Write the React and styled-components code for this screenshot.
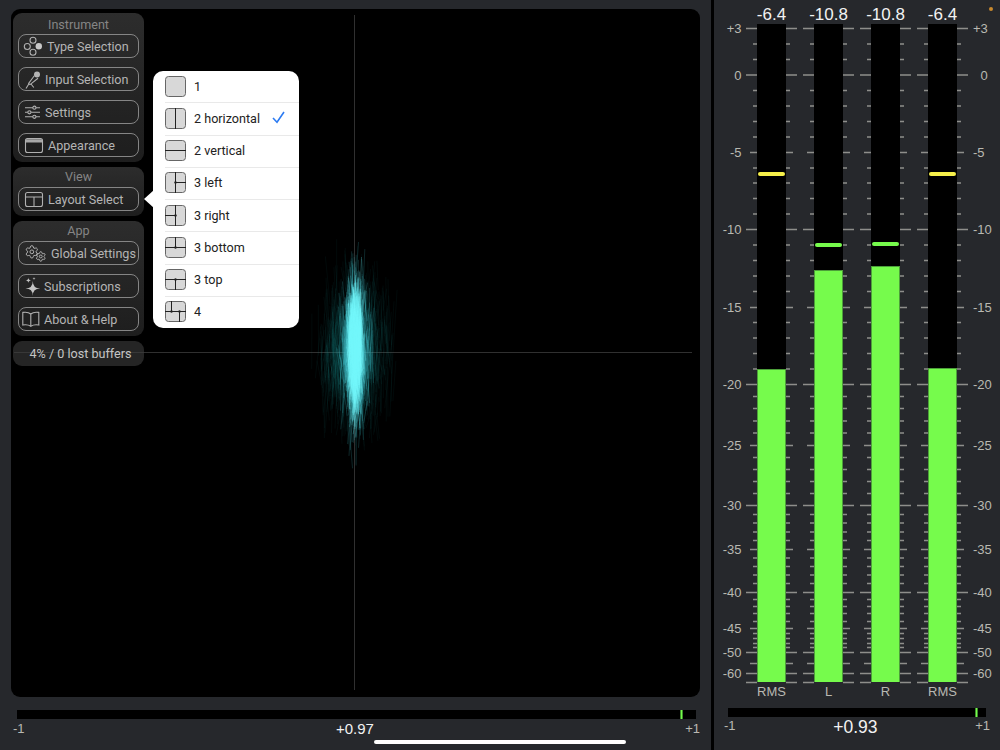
import styled, {createGlobalStyle} from "styled-components";

const GlobalStyle = createGlobalStyle`
    html, body {
        margin: 0;
        padding: 0;
        background: #26282c;
    }
    * {
        box-sizing: border-box;
    }
`;

const UI_FONT = `Roboto, "Liberation Sans", sans-serif`;
const METER_FONT = `"Liberation Sans", Arial, sans-serif`;

const Page = styled.div`
    position: relative;
    width: 1000px;
    height: 750px;
    overflow: hidden;
    display: flex;
    background: #26282c;
`;

const LeftPanel = styled.div`
    width: 711px;
    padding: 9px 11px 0;
    display: flex;
    flex-direction: column;
`;

const Divider = styled.div`
    width: 3px;
    background: #000;
`;

const RightPanel = styled.div`
    position: relative;
    flex: 1;
    display: flex;
    flex-direction: column;
`;

const Scope = styled.div`
    position: relative;
    width: 689px;
    height: 688px;
    flex-shrink: 0;
    background: #000;
    border-radius: 9px;
    overflow: hidden;
`;

const ScopeDrawing = styled.svg`
    display: block;
    width: 689px;
    height: 688px;
`;

const Sidebar = styled.div`
    position: absolute;
    left: 2px;
    top: 4px;
    width: 131px;
    display: flex;
    flex-direction: column;
    gap: 5px;
    font-family: ${UI_FONT};
`;

const Group = styled.div`
    padding: 2px 5px 4.5px;
    display: flex;
    flex-direction: column;
    gap: 9px;
    border-radius: 9px;
    background: linear-gradient(rgba(72, 72, 72, 0.62), rgba(54, 54, 54, 0.55));
`;

const GroupTitle = styled.div`
    height: ${(p) => (p.$compact ? 18.5 : 19)}px;
    margin-bottom: -9px;
    line-height: ${(p) => (p.$compact ? 15 : 19)}px;
    text-align: center;
    font-size: 12.6px;
    color: #858585;
`;

const MenuButton = styled.div`
    height: 24px;
    display: flex;
    align-items: center;
    border: 1px solid #858585;
    border-radius: 8px;
    color: #b4b4b4;
    font-size: 12.6px;
    white-space: nowrap;
`;

const IconSlot = styled.div`
    width: ${(p) => p.$width}px;
    height: 22px;
    flex-shrink: 0;
`;

const ButtonIcon = styled.svg`
    display: block;
    margin: -1px 0 0 -1px;
    overflow: visible;
    fill: none;
    stroke: #b0b0b0;
    stroke-width: 1.1;
`;

const Status = styled.div`
    height: 25px;
    padding-left: 4px;
    line-height: 25px;
    text-align: center;
    border-radius: 9px;
    font-size: 12.6px;
    color: #c4c4c4;
    background: rgba(62, 62, 62, 0.6);
`;

const Popover = styled.div`
    position: absolute;
    left: 142px;
    top: 62px;
    width: 146px;
    height: 257px;
    display: flex;
    flex-direction: column;
    background: #fff;
    border-radius: 10px;
    font-family: ${UI_FONT};

    &::before {
        content: "";
        position: absolute;
        left: -9px;
        top: 119px;
        width: 10px;
        height: 18px;
        background: #fff;
        clip-path: polygon(0 50%, 100% 0, 100% 100%);
    }
`;

const LayoutRow = styled.div`
    flex: 1;
    margin-left: 12px;
    padding-bottom: 1px;
    display: flex;
    align-items: center;
    gap: 8px;
    font-size: 12.6px;
    color: #222;
    border-bottom: ${(p) => (p.$last ? "none" : "1px solid #e9e9e9")};
`;

const LayoutLabel = styled.span`
    flex: 1;
`;

const CheckMark = styled.svg`
    width: 14px;
    height: 14px;
    margin-right: 13px;
    fill: none;
    stroke: #2c7bf2;
    stroke-width: 1.6;
`;

const BalanceBlock = styled.div`
    display: flex;
    flex-direction: column;
    margin: ${(p) => p.$margin};
`;

const BalanceTrack = styled.div`
    position: relative;
    height: 9px;
    margin: 0 ${(p) => p.$inset}px;
    background: #000;
`;

const BalanceMark = styled.div`
    position: absolute;
    top: 0;
    bottom: 0;
    left: ${(p) => p.$left}px;
    width: ${(p) => p.$width}px;
    background: #76fb4c;
    border: 0 solid #3f8f2c;
    border-width: 0 0.5px;
`;

const BalanceLabels = styled.div`
    display: flex;
    justify-content: space-between;
    align-items: center;
    height: ${(p) => p.$height}px;
    font-family: ${METER_FONT};
    font-size: 13px;
    color: #b9b9b2;
`;

const BalanceValue = styled.span`
    margin-top: ${(p) => p.$drop || 0}px;
    font-size: ${(p) => p.$size}px;
    color: #f2f2f2;
`;

const MeterColumns = styled.div`
    position: relative;
    display: flex;
    gap: 28px;
    padding: 5px 0 0 43px;
    font-family: ${METER_FONT};
`;

const MeterColumn = styled.div`
    width: 29px;
    display: flex;
    flex-direction: column;
    align-items: center;
`;

const PeakValue = styled.div`
    height: 19px;
    line-height: 19px;
    font-size: 17px;
    color: #f2f2f2;
    white-space: nowrap;
`;

const MeterBar = styled.div`
    position: relative;
    width: 29px;
    height: 658px;
    display: flex;
    flex-direction: column;
    justify-content: flex-end;
    background: #000;
`;

const MeterFill = styled.div`
    height: ${(p) => p.$height}px;
    background: #76fb4c;
    border: 1px solid #4d9f3a;
    border-bottom: none;
`;

const PeakHold = styled.div`
    position: absolute;
    left: 1px;
    right: 1px;
    top: ${(p) => p.$top}px;
    height: 4px;
    border-radius: 2px;
    background: ${(p) => p.$color};
`;

const MeterName = styled.div`
    height: 20px;
    line-height: 20px;
    font-size: 13px;
    color: #b9b9b2;
`;

const ScaleDrawing = styled.svg`
    position: absolute;
    left: 0;
    top: 0;
    width: 286px;
    height: 700px;
    font-family: ${METER_FONT};
    font-size: 13px;
`;

const BlinkDot = styled.div`
    position: absolute;
    right: 7px;
    top: 7px;
    width: 4px;
    height: 4px;
    border-radius: 50%;
    background: #c98a2e;
`;

const HomeIndicator = styled.div`
    position: absolute;
    left: 374px;
    bottom: 6px;
    width: 252px;
    height: 4px;
    border-radius: 2px;
    background: #fff;
`;

// ----- scope noise -----
const makeRandom = (seed) => () => {
    seed = (seed + 0x6d2b79f5) | 0;
    let t = Math.imul(seed ^ (seed >>> 15), 1 | seed);
    t = (t + Math.imul(t ^ (t >>> 7), 61 | t)) ^ t;
    return ((t ^ (t >>> 14)) >>> 0) / 4294967296;
};

const makeStreaks = (count, spreadX, spreadY, seed) => {
    const random = makeRandom(seed);
    const gauss = () => (random() + random() + random() + random() - 2) / 0.82;
    const streaks = [];
    for (let i = 0; i < count; i++) {
        const x = gauss() * spreadX;
        const y = gauss() * spreadY * Math.sqrt(Math.max(0.05, 1 - (x * x) / (spreadX * spreadX * 6)));
        const len = 8 + random() * spreadY * 0.6;
        const lean = (random() - 0.5) * 6;
        streaks.push(`M${(355 + x - lean).toFixed(1)} ${(350 + y - len).toFixed(1)}L${(355 + x + lean).toFixed(1)} ${(350 + y + len).toFixed(1)}`);
    }
    return streaks.join("");
};

const HALO = makeStreaks(800, 22, 46, 11);
const MIDDLE = makeStreaks(620, 8.5, 43, 23);
const CORE = makeStreaks(520, 4.4, 36, 37);

const Waveform = () => (
    <ScopeDrawing viewBox="11 9 689 688">
        <path d="M354.5 15V690M14 352.5H692" stroke="#303030" strokeWidth="1" fill="none" />
        <path d={HALO} stroke="#1f8a8e" strokeOpacity="0.07" strokeWidth="1" fill="none" />
        <path d={MIDDLE} stroke="#3fc0c6" strokeOpacity="0.2" strokeWidth="1" fill="none" />
        <path d={CORE} stroke="#72f8fc" strokeOpacity="0.26" strokeWidth="1" fill="none" />
    </ScopeDrawing>
);

// ----- toolbar icons, drawn in button coordinates -----
const GEAR =
    "M9.671 4.136a2.34 2.34 0 0 1 4.659 0 2.34 2.34 0 0 0 3.319 1.915 2.34 2.34 0 0 1 2.33 4.033 2.34 2.34 0 0 0 0 3.831 2.34 2.34 0 0 1-2.33 4.033 2.34 2.34 0 0 0-3.319 1.915 2.34 2.34 0 0 1-4.659 0 2.34 2.34 0 0 0-3.32-1.915 2.34 2.34 0 0 1-2.33-4.033 2.34 2.34 0 0 0 0-3.831A2.34 2.34 0 0 1 6.35 6.051a2.34 2.34 0 0 0 3.32-1.915";

const star = (cx, cy, r) =>
    `M${cx} ${cy - r}Q${cx} ${cy} ${cx + r} ${cy}Q${cx} ${cy} ${cx} ${cy + r}Q${cx} ${cy} ${cx - r} ${cy}Q${cx} ${cy} ${cx} ${cy - r}Z`;

const Gear = ({x, y, scale}) => (
    <g transform={`translate(${x} ${y}) scale(${scale})`} strokeWidth={1 / scale}>
        <path d={GEAR} />
        <circle cx="12" cy="12" r="3" />
    </g>
);

const ICONS = {
    type: (
        <>
            <circle cx="15" cy="6.3" r="3" />
            <circle cx="9.3" cy="12.5" r="3" />
            <circle cx="15" cy="18.3" r="3" />
            <circle cx="20.8" cy="12.3" r="3.2" fill="#c8c8c8" stroke="none" />
        </>
    ),
    input: (
        <>
            <circle cx="19" cy="7.6" r="3" fill="#b4b4b4" stroke="none" />
            <path d="M16.5 8.5L10.6 16.4 12 17.6 20 11.2M10.8 17L8 21.5M13 17L15.8 20.5" />
        </>
    ),
    settings: (
        <>
            <path d="M7 7.7H22M7 12.3H22M7 16.8H22" />
            <circle cx="16.4" cy="7.7" r="1.6" fill="#2f2f2f" />
            <circle cx="11.4" cy="12.3" r="1.6" fill="#2f2f2f" />
            <circle cx="16.4" cy="16.8" r="1.6" fill="#2f2f2f" />
        </>
    ),
    appearance: (
        <>
            <rect x="7.5" y="5.5" width="17" height="14" rx="2" />
            <path d="M8 6.2H24V9.5H8Z" fill="#a8a8a8" stroke="none" />
        </>
    ),
    layout: (
        <>
            <rect x="7.5" y="5.5" width="17" height="14" rx="2" />
            <path d="M7.5 10H24.5M16 10V19.5" />
        </>
    ),
    global: (
        <>
            <Gear x={6.4} y={3.4} scale={0.62} />
            <Gear x={17} y={9.7} scale={0.48} />
        </>
    ),
    subscriptions: (
        <>
            <path d={star(14.8, 14.5, 7.4)} fill="#c4c4c4" stroke="none" />
            <path d={star(10.4, 6.4, 2.8)} fill="#c4c4c4" stroke="none" />
            <path d={star(16, 4.6, 1.5)} fill="#c4c4c4" stroke="none" />
        </>
    ),
    about: <path d="M12.8 7C11 5.4 8 4.9 4.8 5.4V18C8 17.5 11 18 12.8 19.3 14.6 18 17.6 17.5 20.8 18V5.4C17.6 4.9 14.6 5.4 12.8 7V19.3" />,
};

const MENU = [
    {
        title: "Instrument",
        items: [
            {icon: "type", label: "Type Selection", slot: 28},
            {icon: "input", label: "Input Selection", slot: 26},
            {icon: "settings", label: "Settings", slot: 26},
            {icon: "appearance", label: "Appearance", slot: 29},
        ],
    },
    {title: "View", compact: true, items: [{icon: "layout", label: "Layout Select", slot: 29}]},
    {
        title: "App",
        compact: true,
        items: [
            {icon: "global", label: "Global Settings", slot: 32},
            {icon: "subscriptions", label: "Subscriptions", slot: 25},
            {icon: "about", label: "About & Help", slot: 25},
        ],
    },
];

// ----- popover -----
const LAYOUTS = [
    {label: "1", lines: ""},
    {label: "2 horizontal", lines: "M10.5 0V21", checked: true},
    {label: "2 vertical", lines: "M0 10.5H21"},
    {label: "3 left", lines: "M10.5 0V21M10.5 10.5H21", dot: [10.5, 10.5]},
    {label: "3 right", lines: "M10.5 0V21M0 10.5H10.5", dot: [10.5, 10.5]},
    {label: "3 bottom", lines: "M0 10.5H21M10.5 0V10.5", dot: [10.5, 10.5]},
    {label: "3 top", lines: "M0 10.5H21M10.5 10.5V21", dot: [10.5, 10.5]},
    {label: "4", lines: "M0 10.5H21M6.5 0V10.5M14.5 10.5V21", dot: [6.5, 10.5], dot2: [14.5, 10.5]},
];

const LayoutIcon = ({lines, dot, dot2}) => (
    <svg width="21" height="21" viewBox="0 0 21 21" style={{flexShrink: 0}}>
        <rect x="0.5" y="0.5" width="20" height="20" rx="3" fill="#d8d8d8" stroke="#666" />
        <path d={lines} stroke="#222" strokeWidth="1" fill="none" />
        {dot && <circle cx={dot[0]} cy={dot[1]} r="1.2" fill="#222" />}
        {dot2 && <circle cx={dot2[0]} cy={dot2[1]} r="1.2" fill="#222" />}
    </svg>
);

// ----- meter scale: y position of every dB step -----
const TICKS = [
    [28.5, 3], [44, 1], [59.5, 1], [75, 3],
    [90.5, 1], [106, 1], [121.5, 1], [137, 1], [152.5, 2],
    [168, 1], [183, 1], [198.5, 1], [214, 1], [229.5, 3],
    [245, 1], [260.5, 1], [276, 1], [291.5, 1], [307.5, 2],
    [322.5, 1], [338, 1], [353.5, 1], [369, 1], [384.5, 3],
    [396.5, 1], [408.5, 1], [421, 1], [433, 1], [445.5, 2],
    [457.5, 1], [469.5, 1], [481.5, 1], [493.5, 1], [505.5, 3],
    [514.5, 1], [523, 1], [532, 1], [540.5, 1], [549.5, 2],
    [558, 1], [566.5, 1], [575, 1], [583.5, 1], [592.5, 3],
    [599.5, 1], [606.5, 1], [613.5, 1], [621.5, 1], [628.5, 2],
    [633.5, 1], [638.5, 1], [643.5, 1], [647.5, 1], [652.5, 3],
    [663.5, 2], [673.5, 3], [682.5, 3],
];

const SCALE_LABELS = [
    ["+3", 28.5], ["0", 75], ["-5", 152.5], ["-10", 229.5], ["-15", 307],
    ["-20", 384.5], ["-25", 445], ["-30", 505.5], ["-35", 549], ["-40", 592],
    ["-45", 628.5], ["-50", 652.5], ["-60", 673.5],
];

const BAR_EDGES = [43, 100, 157, 214];
const TICK_LENGTH = {1: 4, 2: 7, 3: 11};

const scalePath = TICKS.map(([y, kind]) =>
    BAR_EDGES.map((left) => `M${left - TICK_LENGTH[kind]} ${y}H${left}M${left + 29} ${y}H${left + 29 + TICK_LENGTH[kind]}`).join("")
).join("");

const MeterScale = () => (
    <ScaleDrawing viewBox="0 0 286 700">
        <path d={scalePath} stroke="#8e8e8b" strokeWidth="1.5" fill="none" />
        {SCALE_LABELS.map(([text, y]) => (
            <g key={text} fill="#b9b9b2" dominantBaseline="central">
                <text x="27.5" y={y} textAnchor="end">{text}</text>
                <text x={text === "0" ? 266.5 : 259} y={y}>{text}</text>
            </g>
        ))}
    </ScaleDrawing>
);

const METERS = [
    {name: "RMS", value: "-6.4", fill: 313, peak: 148, color: "#f6f04a"},
    {name: "L", value: "-10.8", fill: 412, peak: 219, color: "#76fb4c"},
    {name: "R", value: "-10.8", fill: 416, peak: 218, color: "#76fb4c"},
    {name: "RMS", value: "-6.4", fill: 314, peak: 148, color: "#f6f04a"},
];

const App = () => {
    return (
        <Page>
            <GlobalStyle />
            <LeftPanel>
                <Scope>
                    <Waveform />
                    <Sidebar>
                        {MENU.map((group) => (
                            <Group key={group.title}>
                                <GroupTitle $compact={group.compact}>{group.title}</GroupTitle>
                                {group.items.map((item) => (
                                    <MenuButton key={item.label}>
                                        <IconSlot $width={item.slot}>
                                            <ButtonIcon width="32" height="24" viewBox="0 0 32 24">
                                                {ICONS[item.icon]}
                                            </ButtonIcon>
                                        </IconSlot>
                                        {item.label}
                                    </MenuButton>
                                ))}
                            </Group>
                        ))}
                        <Status>4% / 0 lost buffers</Status>
                    </Sidebar>
                    <Popover>
                        {LAYOUTS.map((layout, i) => (
                            <LayoutRow key={layout.label} $last={i === LAYOUTS.length - 1}>
                                <LayoutIcon lines={layout.lines} dot={layout.dot} dot2={layout.dot2} />
                                <LayoutLabel>{layout.label}</LayoutLabel>
                                {layout.checked && (
                                    <CheckMark viewBox="0 0 14 14">
                                        <path d="M1 7L5 11.2 12 1" />
                                    </CheckMark>
                                )}
                            </LayoutRow>
                        ))}
                    </Popover>
                </Scope>
                <BalanceBlock $margin="13px 0 0 2px">
                    <BalanceTrack $inset={4}>
                        <BalanceMark $left={663} $width={3} />
                    </BalanceTrack>
                    <BalanceLabels $height={19}>
                        <span>-1</span>
                        <BalanceValue $size={15}>+0.97</BalanceValue>
                        <span>+1</span>
                    </BalanceLabels>
                </BalanceBlock>
            </LeftPanel>
            <Divider />
            <RightPanel>
                <BlinkDot />
                <MeterColumns>
                    <MeterScale />
                    {METERS.map((meter, i) => (
                        <MeterColumn key={i}>
                            <PeakValue>{meter.value}</PeakValue>
                            <MeterBar>
                                <MeterFill $height={meter.fill} />
                                <PeakHold $top={meter.peak} $color={meter.color} />
                            </MeterBar>
                            <MeterName>{meter.name}</MeterName>
                        </MeterColumn>
                    ))}
                </MeterColumns>
                <BalanceBlock $margin="6px 10px 0 10px">
                    <BalanceTrack $inset={4}>
                        <BalanceMark $left={247} $width={3} />
                    </BalanceTrack>
                    <BalanceLabels $height={16}>
                        <span>-1</span>
                        <BalanceValue $size={17.5} $drop={5}>+0.93</BalanceValue>
                        <span>+1</span>
                    </BalanceLabels>
                </BalanceBlock>
            </RightPanel>
            <HomeIndicator />
        </Page>
    );
};

export default App;
